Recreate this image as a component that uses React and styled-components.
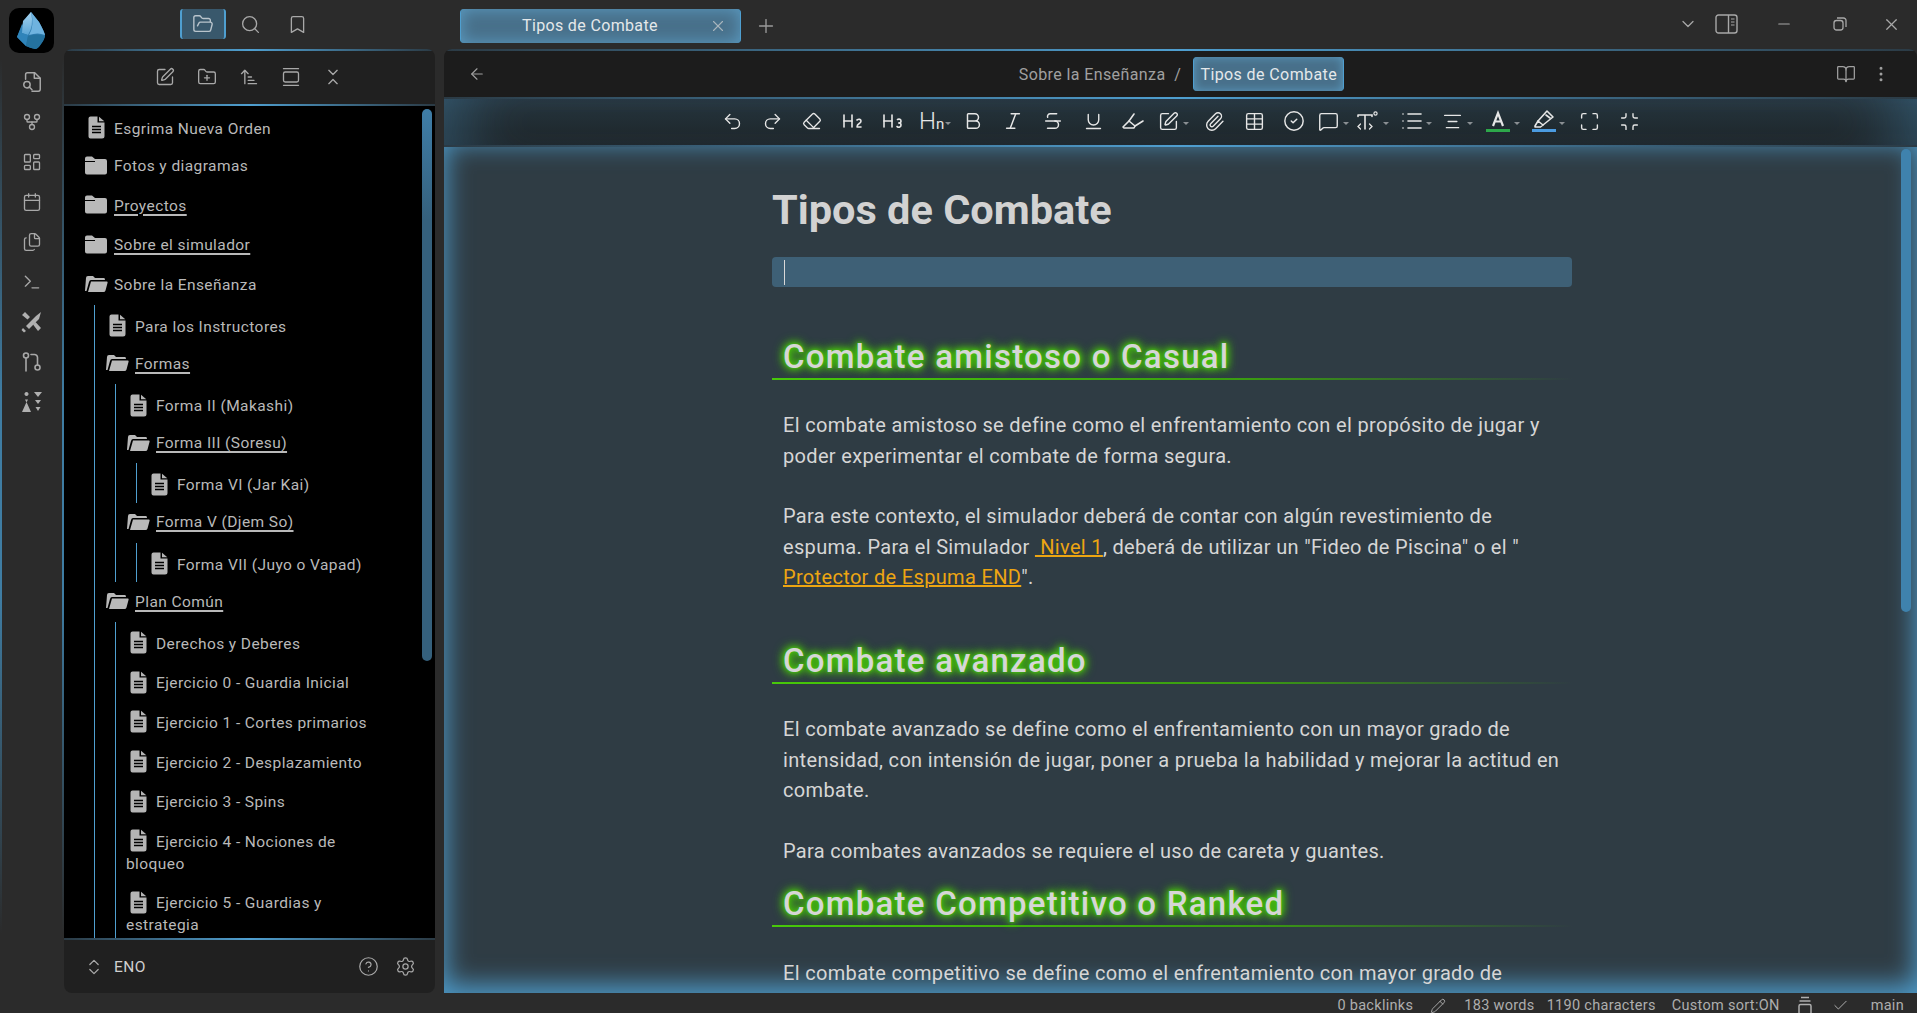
import React from 'react'
import styled, { createGlobalStyle } from 'styled-components'
import {
  FolderOpen, Search, Bookmark, GitFork, LayoutDashboard, Calendar, Files, Terminal,
  SquarePen, FolderPlus, ArrowUpNarrowWide, GalleryVertical, ChevronsDownUp, ChevronsUpDown, CircleHelp, Settings,
  X, Plus, ChevronDown, Minus, ArrowLeft, BookOpen, MoreVertical,
  Undo2, Redo2, Eraser, Heading2, Heading3, Bold, Italic, Strikethrough, Underline, Paperclip, Table,
  CircleCheck, MessageSquare, List, AlignCenter, Maximize, Minimize, Check, Pencil,
} from 'lucide-react'

const BLUE = '#4f9fd0'
const FONT = `Roboto, "Noto Sans", sans-serif`

const Global = createGlobalStyle`
  html, body { margin: 0; padding: 0; height: 100%; background: #2b2b2b; overflow: hidden; }
  #root { height: 100%; }
  * { box-sizing: border-box; }
`

const Page = styled.div`
  width: 1917px;
  height: 1013px;
  display: flex;
  flex-direction: column;
  font-family: ${FONT};
  color: #bdbdbd;
  overflow: hidden;
`
const Upper = styled.div`
  display: flex;
  height: 993px;
`
const Ribbon = styled.aside`
  width: 64px;
  display: flex;
  flex-direction: column;
  align-items: center;
  border-left: 2px solid;
  border-right: 2px solid;
  border-image: linear-gradient(180deg, #2b2b2b 6%, #3f7da3 40%, #3f7da3 60%, #2b2b2b 94%) 1;
`
const LogoBox = styled.div`
  width: 45px;
  height: 45px;
  margin: 8px 0 0 -2px;
  border-radius: 10px;
  background: #000;
  display: flex;
  align-items: center;
  justify-content: center;
`
const RibbonIcons = styled.div`
  margin-top: 9px;
  display: flex;
  flex-direction: column;
  color: #a8a8a8;
`
const RibbonBtn = styled.div`
  width: 40px;
  height: 40px;
  display: flex;
  align-items: center;
  justify-content: center;
`
const Rest = styled.div`
  flex: 1;
  display: flex;
  flex-direction: column;
  min-width: 0;
`
const TopBar = styled.header`
  height: 49px;
  display: flex;
  align-items: flex-start;
`
const SideTabs = styled.div`
  width: 396px;
  padding: 9px 0 0 116px;
  display: flex;
  color: #a8a8a8;
`
const SideTab = styled.div`
  width: 46px;
  height: 30px;
  display: flex;
  align-items: center;
  justify-content: center;
  border-radius: 3px;
  ${p => p.$active && `
    background: #39586c;
    border-left: 2px solid ${BLUE};
    border-right: 2px solid ${BLUE};
    color: #b9c4cc;
  `}
  & + & { margin-left: 1px; }
`
const Tab = styled.div`
  width: 281px;
  height: 34px;
  margin-top: 9px;
  border-radius: 4px;
  background: #48708a;
  box-shadow: inset 0 0 16px #5b9cc3;
  border-left: 1px solid ${BLUE};
  border-right: 1px solid ${BLUE};
  display: flex;
  align-items: center;
  color: #e4e8ea;
  font-size: 16px;
  letter-spacing: 0.35px;
  padding: 0 0 2px 61px;
  position: relative;
`
const TabClose = styled.span`
  position: absolute;
  right: 13px;
  top: 8px;
  color: #a9b5bd;
  display: flex;
`
const NewTab = styled.div`
  margin: 15px 0 0 14px;
  color: #9a9a9a;
  display: flex;
`
const WinControls = styled.div`
  margin-left: auto;
  display: flex;
  align-items: center;
  height: 48px;
  color: #a8a8a8;
`
const WinBtn = styled.div`
  width: ${p => p.$w}px;
  padding-left: ${p => p.$nudge || 0}px;
  display: flex;
  justify-content: center;
`
const Panels = styled.div`
  flex: 1;
  display: flex;
  gap: 9px;
  min-height: 0;
`
const Side = styled.section`
  width: 371px;
  display: flex;
  flex-direction: column;
  border-radius: 8px;
  overflow: hidden;
  background: #202020;
`
const GlowTop = styled.div`
  height: 2px;
  flex: none;
  background: linear-gradient(90deg, #2b3a44 0%, ${BLUE} 50%, #2b3a44 100%);
`
const SideHead = styled.div`
  height: 53px;
  display: flex;
  align-items: center;
  justify-content: center;
  gap: 22px;
  color: #a8a8a8;
  padding: 0 1px 2px 0;
`
const Tree = styled.div`
  flex: 1;
  background: #000;
  padding: 1px 0 0 20px;
  overflow: hidden;
  position: relative;
  min-height: 0;
`
const Bar = styled.div`
  position: absolute;
  right: 3px;
  top: 3px;
  width: 10px;
  height: 552px;
  border-radius: 5px;
  background: linear-gradient(180deg, #3f7ea8, #35607c 20%, #35607c);
`
const Row = styled.div`
  font-size: 15.5px;
  line-height: 22px;
  letter-spacing: 0.42px;
  color: #b9b9b9;
  width: ${p => p.$w || 'auto'};
  padding: ${p => (p.$folder ? '8.5px 0 9.1px' : '11px 0 6.6px')};
`
const RowLabel = styled.span`
  text-decoration: ${p => (p.$link ? 'underline' : 'none')};
  text-decoration-thickness: 2px;
  text-underline-offset: 3px;
`
const RowIcon = styled.span`
  display: inline-block;
  width: 30px;
  vertical-align: middle;
  margin-top: -4px;
  padding-left: ${p => (p.$folder ? 1 : 4)}px;
  line-height: 0;
`
const Kids = styled.div`
  margin-left: 10px;
  padding-left: 10px;
  border-left: 1px solid ${BLUE};
`
const SideFoot = styled.div`
  height: 53px;
  display: flex;
  align-items: center;
  padding: 0 19px 0 20px;
  color: #a8a8a8;
  flex: none;
`
const Vault = styled.span`
  margin-left: 10px;
  font-size: 15.5px;
  letter-spacing: 0.5px;
  color: #cfcfcf;
  flex: 1;
`
const FootBtn = styled.span`
  display: flex;
  margin-left: 16px;
`
const Main = styled.main`
  flex: 1;
  min-width: 0;
  display: flex;
  flex-direction: column;
  border-radius: 8px 8px 0 0;
  overflow: hidden;
  background: #1c1c1c;
`
const ViewHead = styled.div`
  height: 46px;
  flex: none;
  display: flex;
  align-items: center;
  color: #a0a0a0;
  padding: 0 26px 0 24px;
  position: relative;
`
const Crumbs = styled.div`
  flex: 1;
  display: flex;
  align-items: center;
  justify-content: center;
  font-size: 16px;
  letter-spacing: 0.4px;
  padding-left: 41px;
`
const CrumbPill = styled.span`
  margin-left: 12px;
  height: 34px;
  width: 151px;
  display: flex;
  align-items: center;
  justify-content: center;
  border-radius: 4px;
  color: #e4e8ea;
  background: #48708a;
  box-shadow: inset 0 0 10px #5b9cc3;
  border-left: 1px solid ${BLUE};
  border-right: 1px solid ${BLUE};
`
const Tools = styled.div`
  height: 46px;
  flex: none;
  display: flex;
  align-items: center;
  justify-content: center;
  padding-bottom: 2px;
  color: #e6e6e6;
  background: linear-gradient(180deg, #27353e, #1f2529);
  box-shadow: inset 60px 0 60px -40px rgba(79, 159, 208, .3), inset -60px 0 60px -40px rgba(79, 159, 208, .3);
`
const Tool = styled.div`
  width: ${p => p.$w || 40}px;
  height: 40px;
  display: flex;
  align-items: center;
  justify-content: ${p => (p.$w ? 'flex-start' : 'center')};
  padding-left: ${p => (p.$w ? p.$pad ?? 5 : 0)}px;
  flex: none;
`
const Caret = styled.span`
  margin-left: ${p => p.$gap ?? 4}px;
  width: 0;
  height: 0;
  margin-top: 5px;
  border-left: 3px solid transparent;
  border-right: 3px solid transparent;
  border-top: 3px solid #8a8f93;
`
const HnMark = styled.span`
  font-size: 24px;
  font-weight: 300;
  line-height: 1;
  span { font-size: 15px; font-weight: 400; }
`
const Doc = styled.div`
  flex: 1;
  min-height: 0;
  overflow: hidden;
  background: #2f3c44;
  box-shadow: inset 0 -6px 26px 2px rgba(79, 159, 208, .95);
  position: relative;
  padding: 38px 0 0 328px;
`
const DocBar = styled.div`
  position: absolute;
  right: 6px;
  top: 2px;
  width: 10px;
  height: 463px;
  border-radius: 5px;
  background: #3f82ad;
`
const Column = styled.div`
  width: 800px;
`
const Title = styled.h1`
  margin: 0;
  font-size: 41.5px;
  font-weight: 700;
  line-height: 50px;
  color: #d2d2d2;
  letter-spacing: 0;
`
const ActiveLine = styled.div`
  margin-top: 22px;
  height: 30px;
  border-radius: 4px;
  background: #3e6076;
  padding: 3px 0 0 12px;
  &::before {
    content: '';
    display: block;
    width: 1px;
    height: 25px;
    background: #d8d8d8;
  }
`
const Heading = styled.h2`
  margin: ${p => p.$top}px 0 0;
  padding: 0 0 1px 11px;
  font-size: 33px;
  font-weight: 500;
  line-height: 40px;
  letter-spacing: 1.25px;
  color: #d6d6d6;
  text-shadow: 0 0 3px #48c80a, 0 0 7px #48c80a, 0 0 10px #48c80a, 0 0 12px #48c80a;
  border-bottom: 2px solid;
  border-image: linear-gradient(90deg, #48c80a 0%, #3a9a12 60%, transparent 100%) 1;
`
const Para = styled.p`
  margin: ${p => p.$top ?? 30}px 0 0;
  padding-left: 11px;
  font-size: 20px;
  line-height: 30.6px;
  letter-spacing: 0.33px;
  color: #d6d6d6;
  white-space: nowrap;
`
const DocLink = styled.span`
  color: #eda512;
  text-decoration: underline;
`
const Status = styled.footer`
  height: 20px;
  flex: none;
  display: flex;
  align-items: center;
  justify-content: flex-end;
  padding: 5px 13px 0 0;
  font-size: 14.5px;
  letter-spacing: 0.3px;
  color: #aeaeae;
`
const StatusItem = styled.span`
  margin-left: ${p => p.$gap}px;
  display: flex;
  white-space: nowrap;
`

const ObsidianLogo = () => (
  <svg width="30" height="38" viewBox="0 0 30 38">
    <defs>
      <linearGradient id="g1" x1="0" y1="0" x2="0" y2="1">
        <stop offset="0" stopColor="#a5d3f0" />
        <stop offset="1" stopColor="#5ba6d6" />
      </linearGradient>
      <linearGradient id="g2" x1="0" y1="0" x2="0" y2="1">
        <stop offset="0" stopColor="#4d97c8" />
        <stop offset="1" stopColor="#1c6a9d" />
      </linearGradient>
    </defs>
    <path d="M15 0 L23 10 Q28 19 29 23 Q29 27 25 32 Q22 37 19 37 Q14 36 10 34 L1 25 L8 9 Z" fill="url(#g2)" />
    <path d="M15 0 L7 9 L6 21 L12 23 Q18 14 15 0 Z" fill="url(#g1)" />
    <path d="M15 0 L23 10 Q28 19 29 23 Q22 20 13 23 Q19 13 15 0 Z" fill="#6fb3df" />
    <path d="M1 25 L6 12 L6 21 L12 23 L10 34 Z" fill="#2f84ba" />
    <path d="M12 24 Q21 21 29 24 Q28 28 25 32 Q22 37 19 37 Q14 36 10 34 Z" fill="#24729f" />
  </svg>
)

const FileIcon = () => (
  <svg width="17" height="23" viewBox="0 0 17 23">
    <path d="M2.5 .5 H9.5 V6.5 H16.5 V20 a2.5 2.5 0 0 1 -2.5 2.5 H2.5 A2 2 0 0 1 .5 20.5 V2.5 A2 2 0 0 1 2.5 .5 Z" fill="#b5b5b5" />
    <path d="M11 .7 L16.3 5.2 H11 Z" fill="#b5b5b5" />
    <path d="M4 10.5 H13 M4 13.5 H13 M4 16.5 H13" stroke="#000" strokeWidth="1.4" />
  </svg>
)

const FolderFilled = () => (
  <svg width="22" height="19" viewBox="0 0 22 19">
    <path d="M2 0.5 H7 L10 3 H20 A2 2 0 0 1 22 5 V16.5 A2 2 0 0 1 20 18.5 H2 A2 2 0 0 1 0 16.5 V2.5 A2 2 0 0 1 2 0.5 Z" fill="#b9b9b9" />
    <path d="M0 5.5 H10" stroke="#000" strokeWidth="1" />
  </svg>
)

const FolderOpened = () => (
  <svg width="23" height="17" viewBox="0 0 23 17">
    <path d="M0 16 L1 3 Q1 1 3 1 H8 L10 3 H19 Q20 3 20 5 H6 Q4.5 5 4 7 L1.5 16 Z" fill="#b9b9b9" />
    <path d="M6 6.5 H22 Q23 6.5 22.5 8 L20.5 15.5 Q20 17 18.5 17 H3 Z" fill="#b9b9b9" />
  </svg>
)

const DocSearch = () => (
  <svg width="22" height="22" viewBox="0 0 24 24" fill="none" stroke="currentColor" strokeWidth="1.6" strokeLinecap="round" strokeLinejoin="round">
    <path d="M5 9 V4 a2 2 0 0 1 2 -2 h8 l6 6 v12 a2 2 0 0 1 -2 2 H12" />
    <path d="M14.5 2 V8 H21" />
    <circle cx="6.5" cy="15" r="3.5" />
    <path d="M9 17.5 L12 20.5" />
  </svg>
)

const Crossed = () => (
  <svg width="22" height="22" viewBox="0 0 22 22" fill="#b0b0b0">
    <path d="M20 1 L18 8 L8 18 L5 15 L15 5 Z" />
    <path d="M1 4 L4 1 L9 6 L6.5 8.5 Z M12 13.5 L14.5 11 L20 17 L17 20 Z" />
    <path d="M2 17 L5 20 L3 21.5 L.5 19 Z" />
  </svg>
)

const Branches = () => (
  <svg width="20" height="20" viewBox="0 0 20 20" fill="none" stroke="#a8a8a8" strokeWidth="1.6" strokeLinecap="round">
    <circle cx="4" cy="3.5" r="2.5" />
    <circle cx="15.5" cy="15.5" r="2.5" />
    <path d="M4 6 V19 M9 2.5 H12.5 A3 3 0 0 1 15.5 5.5 V13" />
  </svg>
)

const Chess = () => (
  <svg width="22" height="22" viewBox="0 0 22 22" fill="#b0b0b0">
    <path d="M5.5 4 a2 2 0 1 1 .01 0 Z M4 7.5 h3 l-1.5 3 Z M5.5 10 L10 20 H1 Z" transform="translate(0 1)" />
    <path d="M13 1 H21 L17 6 Z M14 9 H20 L17 13 Z M14.5 16 H19.5 L17 20 Z" />
  </svg>
)

const Highlight = () => (
  <svg width="24" height="20" viewBox="0 0 24 20" fill="none" stroke="currentColor" strokeWidth="1.6" strokeLinejoin="round" strokeLinecap="round">
    <path d="M2 16 L8 10 L14 15 L13 17 H3 Z" />
    <path d="M8 10 L13 3 M14 15 L22 10" />
  </svg>
)

const Marker = () => (
  <g fill="none" stroke="currentColor" strokeWidth="1.6" strokeLinejoin="round" strokeLinecap="round">
    <path d="M3 17 L6 12 L11 16 L8.5 18 H3 Z" />
    <path d="M6 12 L15 2 L21 8 L11 16" />
    <path d="M14 6 L18 9" />
  </g>
)

const TextSize = () => (
  <svg width="24" height="22" viewBox="0 0 24 22" fill="none" stroke="currentColor" strokeWidth="1.6" strokeLinecap="round">
    <path d="M3 5 H17 V6.5 M3 5 V6.5 M10 5 V19" />
    <path d="M5.5 14 L3 16.5 L5.5 19 M14.5 14 L17 16.5 L14.5 19" strokeWidth="1.3" />
    <circle cx="20.5" cy="3.5" r="1.6" strokeWidth="1.2" />
  </svg>
)

const ColorA = ({ color, children }) => (
  <svg width="24" height="24" viewBox="0 0 24 24">
    {children}
    <rect x="0" y="20" width="24" height="3" fill={color} />
  </svg>
)

const Layers = () => (
  <svg width="16" height="20" viewBox="0 0 16 20" fill="none" stroke="currentColor" strokeWidth="1.5">
    <path d="M4 1.5 H12 M2.5 5 H13.5" />
    <rect x="2" y="8.5" width="12" height="13" rx="1.5" />
  </svg>
)

const SidebarToggle = () => (
  <svg width="23" height="20" viewBox="0 0 23 20" fill="none" stroke="currentColor" strokeWidth="1.4">
    <rect x="1" y="1" width="21" height="18" rx="2.5" />
    <path d="M13.5 1 V19" />
    <path d="M16 5 H19.5 M16 8 H19.5 M16 11 H19.5" strokeWidth="1" />
  </svg>
)

const Restore = () => (
  <svg width="14" height="14" viewBox="0 0 14 14" fill="none" stroke="currentColor" strokeWidth="1.3">
    <rect x="1" y="3.5" width="9" height="9.5" rx="2.5" />
    <path d="M4 1 H10.5 A2.5 2.5 0 0 1 13 3.5 V10" />
  </svg>
)

const Item = ({ name, folder, open, link, narrow }) => (
  <Row $folder={folder} $w={narrow}>
    <RowIcon $folder={folder}>
      {folder ? (open ? <FolderOpened /> : <FolderFilled />) : <FileIcon />}
    </RowIcon>
    <RowLabel $link={link}>{name}</RowLabel>
  </Row>
)

const ribbon = [
  <DocSearch />,
  <GitFork size={20} strokeWidth={1.6} />,
  <LayoutDashboard size={20} strokeWidth={1.6} />,
  <Calendar size={20} strokeWidth={1.6} />,
  <Files size={20} strokeWidth={1.6} />,
  <Terminal size={20} strokeWidth={1.6} />,
  <Crossed />,
  <Branches />,
  <Chess />,
]

export default function App() {
  const sw = 1.6
  return (
    <Page>
      <Global />
      <Upper>
        <Ribbon>
          <LogoBox><ObsidianLogo /></LogoBox>
          <RibbonIcons>
            {ribbon.map((icon, i) => <RibbonBtn key={i}>{icon}</RibbonBtn>)}
          </RibbonIcons>
        </Ribbon>
        <Rest>
          <TopBar>
            <SideTabs>
              <SideTab $active><FolderOpen size={22} strokeWidth={1.5} /></SideTab>
              <SideTab><Search size={21} strokeWidth={1.5} /></SideTab>
              <SideTab><Bookmark size={21} strokeWidth={1.5} /></SideTab>
            </SideTabs>
            <Tab>
              Tipos de Combate
              <TabClose><X size={18} strokeWidth={1.5} /></TabClose>
            </Tab>
            <NewTab><Plus size={22} strokeWidth={1.5} /></NewTab>
            <WinControls>
              <WinBtn $w={40}><ChevronDown size={20} strokeWidth={1.5} /></WinBtn>
              <WinBtn $w={36}><SidebarToggle /></WinBtn>
              <WinBtn $w={70} $nudge={10}><Minus size={18} strokeWidth={1.5} /></WinBtn>
              <WinBtn $w={52}><Restore /></WinBtn>
              <WinBtn $w={50}><X size={19} strokeWidth={1.5} /></WinBtn>
              <WinBtn $w={1} />
            </WinControls>
          </TopBar>
          <Panels>
            <Side>
              <GlowTop />
              <SideHead>
                <SquarePen size={20} strokeWidth={sw} />
                <FolderPlus size={20} strokeWidth={sw} />
                <ArrowUpNarrowWide size={20} strokeWidth={sw} />
                <GalleryVertical size={20} strokeWidth={sw} />
                <ChevronsDownUp size={20} strokeWidth={sw} />
              </SideHead>
              <GlowTop />
              <Tree>
                <Item name="Esgrima Nueva Orden" />
                <Item folder name="Fotos y diagramas" />
                <Item folder link name="Proyectos" />
                <Item folder link name="Sobre el simulador" />
                <Item folder open name="Sobre la Enseñanza" />
                <Kids>
                  <Item name="Para los Instructores" />
                  <Item folder open link name="Formas" />
                  <Kids>
                    <Item name="Forma II (Makashi)" />
                    <Item folder open link name="Forma III (Soresu)" />
                    <Kids><Item name="Forma VI (Jar Kai)" /></Kids>
                    <Item folder open link name="Forma V (Djem So)" />
                    <Kids><Item name="Forma VII (Juyo o Vapad)" /></Kids>
                  </Kids>
                  <Item folder open link name="Plan Común" />
                  <Kids>
                    <Item name="Derechos y Deberes" />
                    <Item name="Ejercicio 0 - Guardia Inicial" />
                    <Item name="Ejercicio 1 - Cortes primarios" />
                    <Item name="Ejercicio 2 - Desplazamiento" />
                    <Item name="Ejercicio 3 - Spins" />
                    <Item narrow="230px" name="Ejercicio 4 - Nociones de bloqueo" />
                    <Item narrow="210px" name="Ejercicio 5 - Guardias y estrategia" />
                  </Kids>
                </Kids>
                <Bar />
              </Tree>
              <GlowTop />
              <SideFoot>
                <ChevronsUpDown size={20} strokeWidth={1.5} />
                <Vault>ENO</Vault>
                <FootBtn><CircleHelp size={21} strokeWidth={1.4} /></FootBtn>
                <FootBtn><Settings size={21} strokeWidth={1.4} /></FootBtn>
              </SideFoot>
            </Side>
            <Main>
              <GlowTop />
              <ViewHead>
                <ArrowLeft size={18} strokeWidth={1.5} />
                <Crumbs>
                  Sobre la Enseñanza&nbsp;&nbsp;/
                  <CrumbPill>Tipos de Combate</CrumbPill>
                </Crumbs>
                <BookOpen size={20} strokeWidth={1.5} style={{ marginRight: 15 }} />
                <MoreVertical size={20} strokeWidth={1.6} />
              </ViewHead>
              <GlowTop />
              <Tools>
                <Tool><Undo2 size={21} strokeWidth={sw} /></Tool>
                <Tool><Redo2 size={21} strokeWidth={sw} /></Tool>
                <Tool><Eraser size={20} strokeWidth={sw} /></Tool>
                <Tool><Heading2 size={24} strokeWidth={sw} /></Tool>
                <Tool><Heading3 size={24} strokeWidth={sw} /></Tool>
                <Tool $w={41} $pad={7}><HnMark>H<span>n</span></HnMark><Caret $gap={1} /></Tool>
                <Tool><Bold size={22} strokeWidth={sw} /></Tool>
                <Tool><Italic size={22} strokeWidth={sw} /></Tool>
                <Tool><Strikethrough size={22} strokeWidth={sw} /></Tool>
                <Tool><Underline size={21} strokeWidth={sw} /></Tool>
                <Tool><Highlight /></Tool>
                <Tool $w={41}><SquarePen size={21} strokeWidth={sw} /><Caret /></Tool>
                <Tool><Paperclip size={21} strokeWidth={sw} /></Tool>
                <Tool><Table size={21} strokeWidth={sw} /></Tool>
                <Tool><CircleCheck size={22} strokeWidth={sw} /></Tool>
                <Tool $w={38} $pad={4}><MessageSquare size={21} strokeWidth={sw} /><Caret /></Tool>
                <Tool $w={45} $pad={3}><TextSize /><Caret /></Tool>
                <Tool $w={40} $pad={3}><List size={24} strokeWidth={sw} /><Caret $gap={2} /></Tool>
                <Tool $w={46} $pad={5}><AlignCenter size={21} strokeWidth={sw} /><Caret /></Tool>
                <Tool $w={46} $pad={3}>
                  <ColorA color="#2da84a"><path d="M7 17 L12 4 L17 17 M8.8 12.5 H15.2" fill="none" stroke="currentColor" strokeWidth="2.2" /></ColorA>
                  <Caret />
                </Tool>
                <Tool $w={40} $pad={3}>
                  <ColorA color="#4b9be0"><Marker /></ColorA>
                  <Caret $gap={3} />
                </Tool>
                <Tool><Maximize size={21} strokeWidth={sw} /></Tool>
                <Tool><Minimize size={21} strokeWidth={sw} /></Tool>
              </Tools>
              <GlowTop />
              <Doc>
                <DocBar />
                <Column>
                  <Title>Tipos de Combate</Title>
                  <ActiveLine />
                  <Heading $top={50}>Combate amistoso o Casual</Heading>
                  <Para>
                    El combate amistoso se define como el enfrentamiento con el propósito de jugar y<br />
                    poder experimentar el combate de forma segura.
                  </Para>
                  <Para>
                    Para este contexto, el simulador deberá de contar con algún revestimiento de<br />
                    espuma. Para el Simulador <DocLink>&nbsp;Nivel 1</DocLink>, deberá de utilizar un "Fideo de Piscina" o el "<br />
                    <DocLink>Protector de Espuma END</DocLink>".
                  </Para>
                  <Heading $top={48}>Combate avanzado</Heading>
                  <Para>
                    El combate avanzado se define como el enfrentamiento con un mayor grado de<br />
                    intensidad, con intensión de jugar, poner a prueba la habilidad y mejorar la actitud en<br />
                    combate.
                  </Para>
                  <Para>Para combates avanzados se requiere el uso de careta y guantes.</Para>
                  <Heading $top={18}>Combate Competitivo o Ranked</Heading>
                  <Para $top={31}>El combate competitivo se define como el enfrentamiento con mayor grado de</Para>
                </Column>
              </Doc>
            </Main>
          </Panels>
        </Rest>
      </Upper>
      <Status>
        <StatusItem>0 backlinks</StatusItem>
        <StatusItem $gap={17}><Pencil size={16} strokeWidth={1.4} /></StatusItem>
        <StatusItem $gap={18}>183 words</StatusItem>
        <StatusItem $gap={12}>1190 characters</StatusItem>
        <StatusItem $gap={16}>Custom sort:ON</StatusItem>
        <StatusItem $gap={17}><Layers /></StatusItem>
        <StatusItem $gap={19}><Check size={17} strokeWidth={1.4} /></StatusItem>
        <StatusItem $gap={22}>main</StatusItem>
      </Status>
    </Page>
  )
}
